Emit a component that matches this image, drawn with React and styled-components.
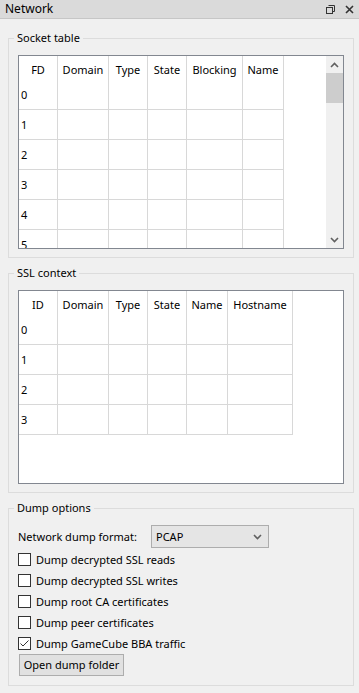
import styled, { createGlobalStyle } from "styled-components";

const GlobalStyle = createGlobalStyle`
  html, body {
    margin: 0;
    padding: 0;
    background: #f0f0f0;
  }
  body {
    font-family: "Noto Sans", "Open Sans", sans-serif;
    font-size: 11px;
    color: #000;
  }
`;

const Panel = styled.div`
  width: 359px;
  height: 693px;
  background: #f0f0f0;
  display: flex;
  flex-direction: column;
`;

const TitleBar = styled.div`
  height: 18px;
  border-bottom: 1px solid #c6c6c6;
  background: #dadada;
  display: flex;
  align-items: center;
  padding: 0 5px 0 5px;
  line-height: 16px;
`;

const TitleText = styled.div`
  flex: 1;
  font-size: 12px;
`;

const TitleButtons = styled.div`
  display: flex;
  align-items: center;
  gap: 10px;
`;

const Body = styled.div`
  display: flex;
  flex-direction: column;
  padding: 11px 5px 0 8px;
  gap: 7px;
`;

const Group = styled.fieldset`
  margin: 0;
  padding: 9px 9px ${(p) => p.$bottom || 8}px 9px;
  border: 1px solid #dcdcdc;
  min-width: 0;
`;

const Legend = styled.legend`
  padding: 0 3px;
  margin-left: -4px;
  line-height: 16px;
  height: 16px;
`;

const TableFrame = styled.div`
  height: ${(p) => p.$height}px;
  border: 1px solid #828790;
  background: #fff;
  display: flex;
  overflow: hidden;
`;

const Grid = styled.div`
  display: grid;
  grid-template-columns: ${(p) => p.$cols.map((c) => c + "px").join(" ")};
  align-content: start;
  flex: none;
`;

const HeaderCell = styled.div`
  height: 24px;
  box-sizing: border-box;
  padding-top: 6px;
  line-height: 16px;
  text-align: center;
  white-space: nowrap;
  border-right: 1px solid #d8d8d8;
`;

const Cell = styled.div`
  height: 30px;
  box-sizing: border-box;
  border-right: 1px solid #d8d8d8;
  border-bottom: 1px solid #d8d8d8;
  line-height: 29px;
  padding-left: 2px;
`;

const ScrollBar = styled.div`
  width: 17px;
  margin-left: auto;
  background: #f0f0f0;
  display: flex;
  flex-direction: column;
`;

const ScrollButton = styled.div`
  height: 17px;
  display: flex;
  align-items: center;
  justify-content: center;
`;

const ScrollTrack = styled.div`
  flex: 1;
`;

const ScrollThumb = styled.div`
  height: 30px;
  background: #cdcdcd;
`;

const FormRow = styled.div`
  height: 23px;
  display: flex;
  align-items: center;
`;

const Label = styled.span`
  width: 133px;
`;

const Combo = styled.div`
  width: 118px;
  height: 23px;
  box-sizing: border-box;
  background: #e5e5e5;
  border: 1px solid #adadad;
  display: flex;
  align-items: center;
  padding: 0 6px 0 4px;
  justify-content: space-between;
`;

const CheckRow = styled.label`
  height: 21px;
  display: flex;
  align-items: center;
  gap: 5px;
  white-space: nowrap;
`;

const CheckBox = styled.span`
  width: 13px;
  height: 13px;
  box-sizing: border-box;
  border: 1px solid #333;
  background: #fff;
  display: flex;
  align-items: center;
  justify-content: center;
`;

const Checks = styled.div`
  display: flex;
  flex-direction: column;
  margin-top: 1px;
`;

const PushButton = styled.button`
  display: block;
  width: 105px;
  height: 22px;
  margin-left: 1px;
  padding: 0;
  background: #e1e1e1;
  border: 1px solid #adadad;
  font: inherit;
  color: #000;
  line-height: 16px;
  white-space: nowrap;
`;

const Chevron = ({ up }) => (
  <svg width="9" height="6" viewBox="0 0 9 6">
    <path
      d={up ? "M1 5 L4.5 1.5 L8 5" : "M1 1 L4.5 4.5 L8 1"}
      fill="none"
      stroke="#606060"
      strokeWidth="1.6"
    />
  </svg>
);

function DataTable({ columns, rows, height, scroll }) {
  const widths = columns.map((c) => c[1]);
  return (
    <TableFrame $height={height}>
      <Grid $cols={widths}>
        {columns.map(([name]) => (
          <HeaderCell key={name}>{name}</HeaderCell>
        ))}
        {Array.from({ length: rows }).map((_, r) =>
          columns.map(([name], i) => (
            <Cell key={name + r}>{i === 0 ? r : ""}</Cell>
          ))
        )}
      </Grid>
      {scroll && (
        <ScrollBar>
          <ScrollButton>
            <Chevron up />
          </ScrollButton>
          <ScrollTrack>
            <ScrollThumb />
          </ScrollTrack>
          <ScrollButton>
            <Chevron />
          </ScrollButton>
        </ScrollBar>
      )}
    </TableFrame>
  );
}

const socketCols = [
  ["FD", 39],
  ["Domain", 51],
  ["Type", 39],
  ["State", 39],
  ["Blocking", 56],
  ["Name", 41],
];

const sslCols = [
  ["ID", 39],
  ["Domain", 51],
  ["Type", 39],
  ["State", 39],
  ["Name", 41],
  ["Hostname", 65],
];

const options = [
  ["Dump decrypted SSL reads", false],
  ["Dump decrypted SSL writes", false],
  ["Dump root CA certificates", false],
  ["Dump peer certificates", false],
  ["Dump GameCube BBA traffic", true],
];

export default function App() {
  return (
    <Panel>
      <GlobalStyle />
      <TitleBar>
        <TitleText>Network</TitleText>
        <TitleButtons>
          <svg width="9" height="9" viewBox="0 0 9 9">
            <path d="M2.5 0.5 H8.5 V6.5 H6.5" fill="none" stroke="#333" />
            <path d="M2.5 2.5 H6.5" stroke="#333" />
            <rect x="0.5" y="2.5" width="6" height="6" fill="none" stroke="#333" />
          </svg>
          <svg width="9" height="9" viewBox="0 0 9 9">
            <path d="M1 1 L8 8 M8 1 L1 8" stroke="#333" strokeWidth="1.6" />
          </svg>
        </TitleButtons>
      </TitleBar>
      <Body>
        <Group>
          <Legend>Socket table</Legend>
          <DataTable columns={socketCols} rows={6} height={192} scroll />
        </Group>
        <Group>
          <Legend>SSL context</Legend>
          <DataTable columns={sslCols} rows={4} height={192} />
        </Group>
        <Group $bottom={9}>
          <Legend>Dump options</Legend>
          <FormRow>
            <Label>Network dump format:</Label>
            <Combo>
              <span>PCAP</span>
              <Chevron />
            </Combo>
          </FormRow>
          <Checks>
            {options.map(([text, checked]) => (
              <CheckRow key={text}>
                <CheckBox>
                  {checked && (
                    <svg width="11" height="11" viewBox="0 0 11 11">
                      <path d="M1.5 5.5 L4 8 L9.5 2.5" fill="none" stroke="#333" strokeWidth="1" />
                    </svg>
                  )}
                </CheckBox>
                {text}
              </CheckRow>
            ))}
          </Checks>
          <PushButton>Open dump folder</PushButton>
        </Group>
      </Body>
    </Panel>
  );
}
